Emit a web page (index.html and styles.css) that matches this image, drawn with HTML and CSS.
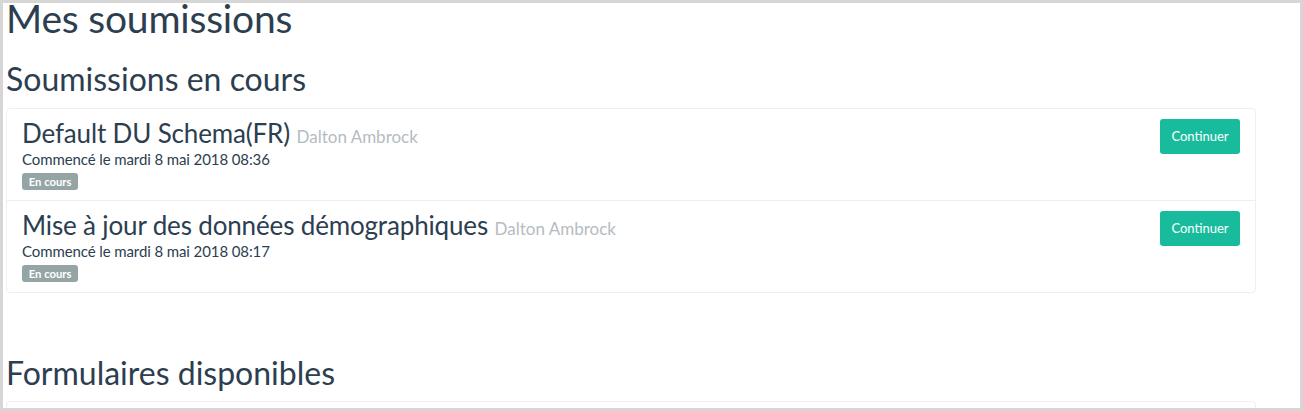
FILE: index.html
```html
<!DOCTYPE html>
<html lang="fr">

<head>
    <meta charset="UTF-8">
    <meta name="viewport" content="width=device-width, initial-scale=1.0">
    <title>Mes soumissions</title>
    <link rel="stylesheet" href="styles.css">
</head>

<body>
    <div class="frame">
        <div class="content">
            <h1>Mes soumissions</h1>

            <h2>Soumissions en cours</h2>
            <div class="list-group">
                <div class="list-item">
                    <div class="item-body">
                        <h3>Default DU Schema(FR) <small>Dalton Ambrock</small></h3>
                        <p>Commencé le mardi 8 mai 2018 08:36</p>
                        <span class="badge">En cours</span>
                    </div>
                    <button class="btn-continue">Continuer</button>
                </div>
                <div class="list-item">
                    <div class="item-body">
                        <h3>Mise à jour des données démographiques <small>Dalton Ambrock</small></h3>
                        <p>Commencé le mardi 8 mai 2018 08:17</p>
                        <span class="badge">En cours</span>
                    </div>
                    <button class="btn-continue">Continuer</button>
                </div>
            </div>

            <h2 class="section-gap">Formulaires disponibles</h2>
            <div class="list-group">
                <div class="list-item empty-item"></div>
            </div>
        </div>
    </div>
</body>

</html>
```

FILE: styles.css
```css
body {
    margin: 0;
    font-family: Lato, "Open Sans", sans-serif;
    color: #2c3e50;
}

.frame {
    box-sizing: border-box;
    height: 411px;
    border: 3px solid #d6d6d6;
    overflow: hidden;
    background: #fff;
}

.content {
    width: 1250px;
    padding-left: 3px;
}

h1 {
    font-size: 39px;
    font-weight: 400;
    line-height: 31px;
    letter-spacing: -0.2px;
    margin: 0;
}

h2 {
    font-size: 32px;
    font-weight: 400;
    line-height: 1.1;
    margin: 27px 0 11.5px 0;
}

.section-gap {
    margin-top: 62px;
}

.list-group {
    border: 1px solid #ecf0f1;
    border-radius: 4px;
}

.list-item {
    display: flex;
    justify-content: space-between;
    align-items: flex-start;
    padding: 10px 15px;
    border-top: 1px solid #ecf0f1;
}

.list-item:first-child {
    border-top: none;
}

.empty-item {
    height: 60px;
}

h3 {
    font-size: 26px;
    font-weight: 400;
    line-height: 1.1;
    letter-spacing: -0.15px;
    margin: 0 0 2px 0;
}

h3 small {
    font-size: 17px;
    letter-spacing: 0;
    color: #b4bcc2;
}

.item-body p {
    font-size: 15px;
    line-height: 21.4px;
    letter-spacing: -0.1px;
    margin: 0;
}

.badge {
    display: block;
    width: fit-content;
    height: 17px;
    line-height: 17px;
    margin-top: 2px;
    padding: 0 6.75px;
    font-size: 11.25px;
    font-weight: 700;
    color: #fff;
    background: #95a5a6;
    border-radius: 3px;
}

.btn-continue {
    width: 80px;
    height: 35px;
    padding: 0;
    border: none;
    border-radius: 3px;
    background: #18bc9c;
    color: #fff;
    font-family: Lato, "Open Sans", sans-serif;
    font-size: 13px;
    cursor: pointer;
}
```
